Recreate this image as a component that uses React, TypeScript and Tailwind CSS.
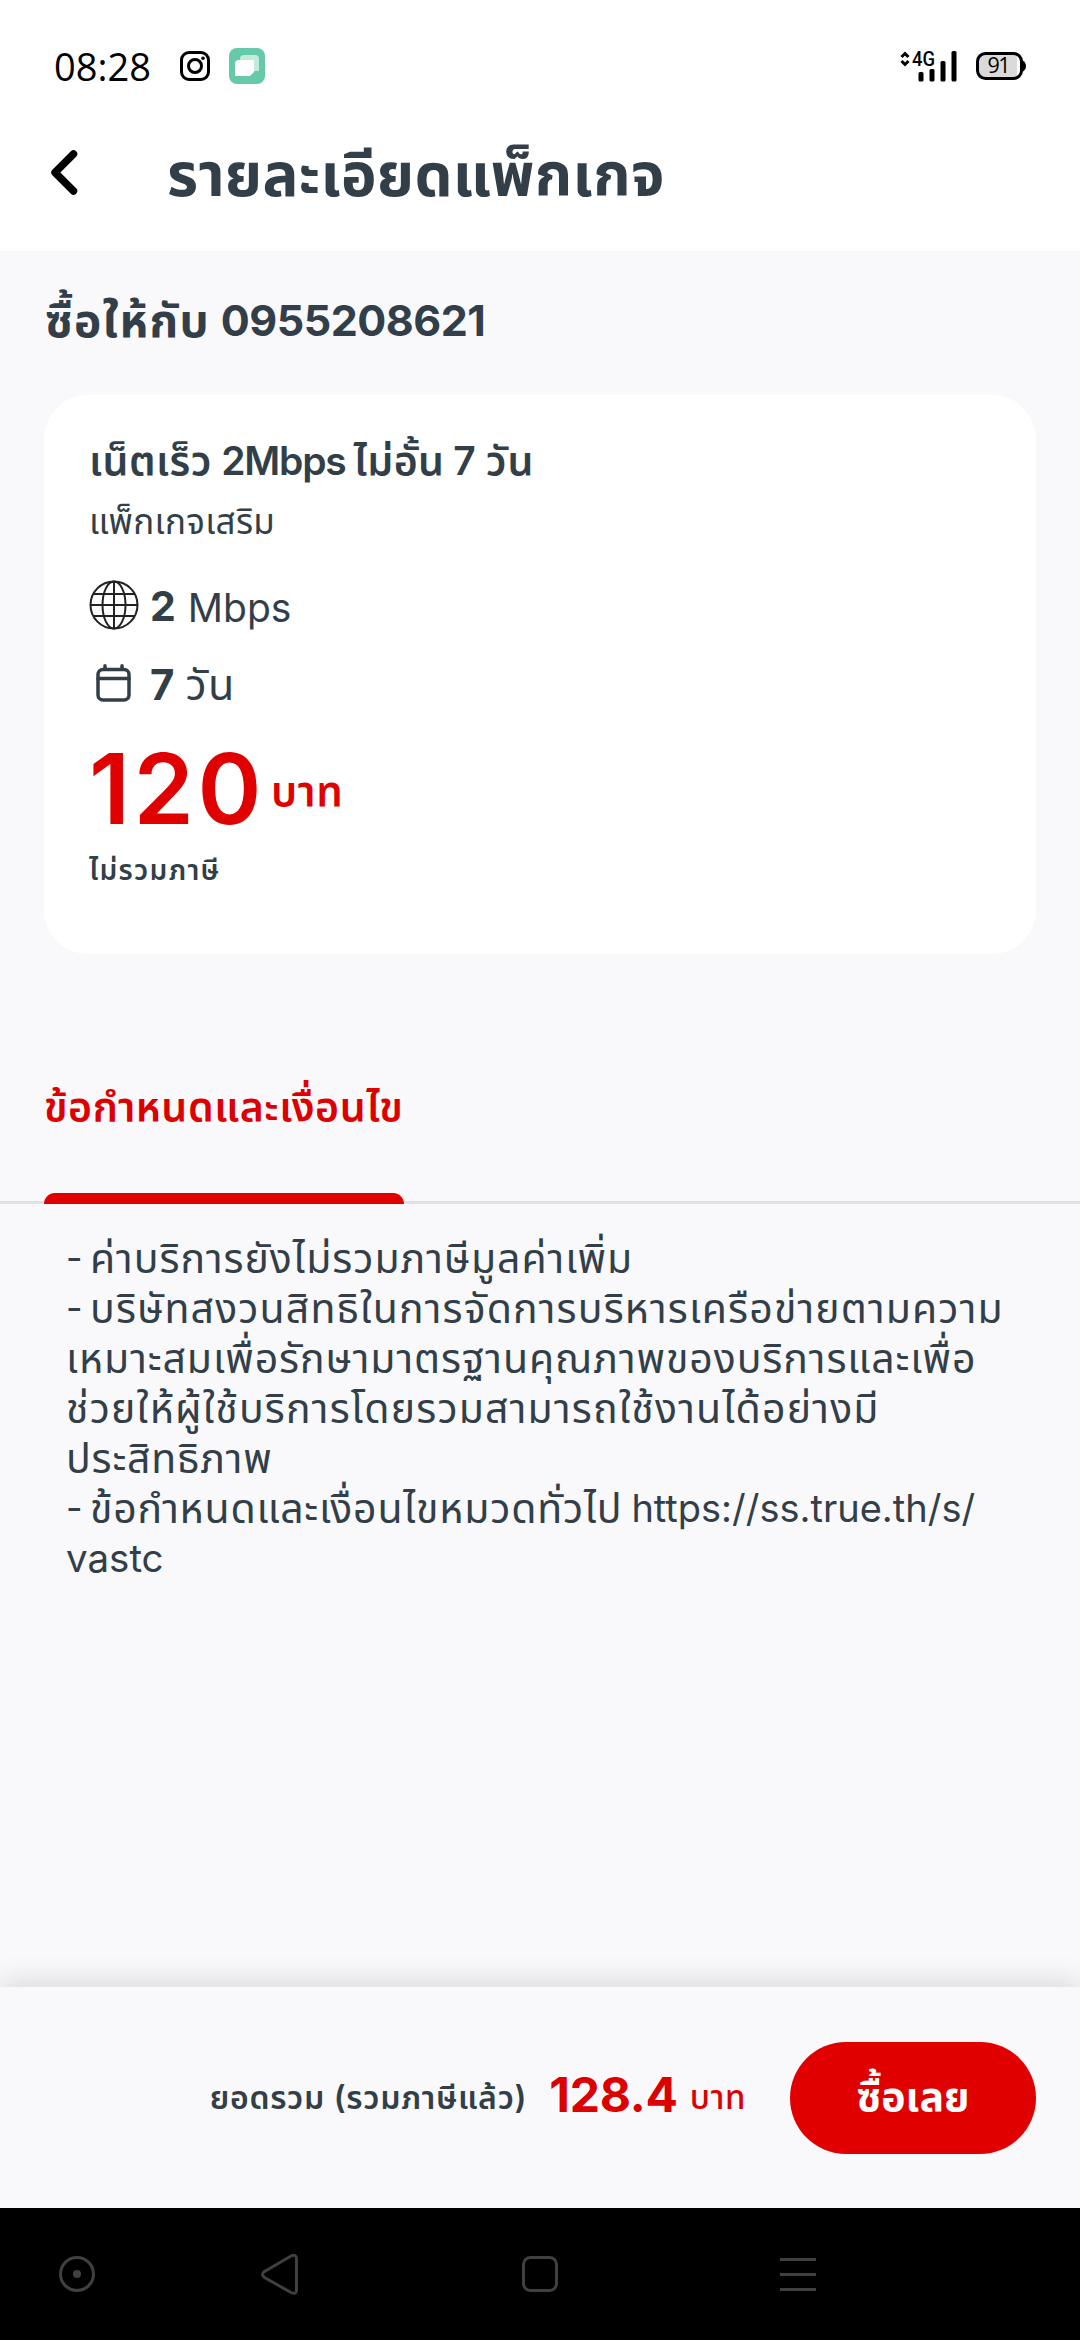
const terms = [
    { dash: true, text: "ค่าบริการยังไม่รวมภาษีมูลค่าเพิ่ม", link: "", space: "tracking-[0.95px]" },
    { dash: true, text: "บริษัทสงวนสิทธิในการจัดการบริหารเครือข่ายตามความ", link: "", space: "tracking-[1.14px]" },
    { dash: false, text: "เหมาะสมเพื่อรักษามาตรฐานคุณภาพของบริการและเพื่อ", link: "", space: "tracking-[0.93px]" },
    { dash: false, text: "ช่วยให้ผู้ใช้บริการโดยรวมสามารถใช้งานได้อย่างมี", link: "", space: "tracking-[1.18px]" },
    { dash: false, text: "ประสิทธิภาพ", link: "", space: "tracking-[0.8px]" },
    { dash: true, text: "ข้อกำหนดและเงื่อนไขหมวดทั่วไป", link: "https://ss.true.th/s/", space: "tracking-[0.8px]" },
    { dash: false, text: "", link: "vastc", space: "" },
]

function StatusBar() {
    return (
        <div className="flex h-[132px] items-center justify-between pl-[54px] pr-[54px] text-black">
            <div className="flex items-center">
                <span className="w-[126px] font-['Open_Sans',sans-serif] text-[38px] leading-[40px]">08:28</span>
                <svg width="30" height="30" viewBox="0 0 30 30" fill="none" stroke="black">
                    <rect x="1.5" y="1.5" width="27" height="27" rx="7.5" strokeWidth="3" />
                    <circle cx="15" cy="15" r="6.5" strokeWidth="3" />
                    <circle cx="23" cy="7.2" r="1.8" fill="black" stroke="none" />
                </svg>
                <svg className="ml-[19px]" width="36" height="36" viewBox="0 0 36 36">
                    <rect width="36" height="36" rx="8" fill="#66c9a9" />
                    <path d="M15 7H26Q30 7 30 11V23H11V11Q11 7 15 7Z" fill="#c2ebdc" />
                    <path d="M10 12H25V24L21 28H6V16Q6 12 10 12Z" fill="white" />
                </svg>
            </div>
            <div className="flex items-center gap-[19px]">
                <svg className="overflow-visible" width="57" height="31" viewBox="0 0 57 31">
                    <path d="M1.5 6L5 2.5L8.5 6M1.5 10L5 13.5L8.5 10" fill="none" stroke="black" strokeWidth="3" />
                    <text x="12" y="15" fontFamily="Roboto, sans-serif" fontSize="19.5" fontWeight="500" textLength="23" lengthAdjust="spacingAndGlyphs">4G</text>
                    <rect x="18.5" y="21" width="5" height="9.5" rx="1.5" />
                    <rect x="29.5" y="18" width="5" height="12.5" rx="1.5" />
                    <rect x="40.5" y="10" width="5" height="20.5" rx="1.5" />
                    <rect x="51.5" y="0" width="5" height="30.5" rx="1.5" />
                </svg>
                <svg className="overflow-visible" width="50" height="28" viewBox="0 0 50 28">
                    <rect x="1.5" y="1.5" width="44" height="25" rx="8" fill="white" />
                    <path d="M9.5 1.5H41V26.5H9.5Q1.5 26.5 1.5 18.5V9.5Q1.5 1.5 9.5 1.5Z" fill="#dadada" />
                    <rect x="1.5" y="1.5" width="44" height="25" rx="8" fill="none" stroke="black" strokeWidth="3" />
                    <path d="M46 8Q50 10 50 14T46 20Z" />
                    <text x="11.5" y="21" fontFamily="Open Sans, sans-serif" fontSize="21.5" textLength="23">91</text>
                </svg>
            </div>
        </div>
    )
}

function Header() {
    return (
        <header className="flex h-[119px] pl-[50px]">
            <svg className="mt-[18px]" width="28" height="45" viewBox="0 0 28 45" fill="none" stroke="black" strokeWidth="7.5" strokeLinecap="round" strokeLinejoin="round">
                <path d="M23.5 4L5 22.5L23.5 41" />
            </svg>
            <h1 className="ml-[89px] mt-[7px] h-[70px] whitespace-nowrap text-[60px] font-bold leading-[70px] tracking-[0.3px]">รายละเอียดแพ็กเกจ</h1>
        </header>
    )
}

function PackageCard() {
    return (
        <section className="mx-[44px] mt-[44px] h-[559px] rounded-[44px] bg-white pl-[45px] pt-[36px] whitespace-nowrap">
            <h3 className="flex h-[60px] text-[41px] font-semibold leading-[60px]">
                <span className="tracking-[0.5px]">เน็ตเร็ว</span>
                <span className="ml-[9px] text-[39px] tracking-[-1.2px]">2Mbps</span>
                <span className="ml-[8px] tracking-[0.3px]">ไม่อั้น</span>
                <span className="ml-[9px] text-[39px] tracking-[-1px]">7</span>
                <span className="ml-[11px] tracking-[1px]">วัน</span>
            </h3>
            <p className="h-[60px] text-[35px] leading-[60px] tracking-[0.3px]">แพ็กเกจเสริม</p>
            <div className="mt-[18px] flex h-[72px] items-center">
                <svg width="50" height="50" viewBox="0 0 50 50" fill="none" stroke="#222" strokeWidth="2">
                    <circle cx="25" cy="25" r="23.5" />
                    <ellipse cx="25" cy="25" rx="11.5" ry="23.5" />
                    <path d="M25 1.5V48.5M1.5 25H48.5M5 14H45M5 36H45" />
                </svg>
                <b className="ml-[11px] pt-[3px] text-[41px]">2</b>
                <span className="ml-[12px] pt-[6px] text-[39px]">Mbps</span>
            </div>
            <div className="flex h-[84px] items-center">
                <svg className="ml-[7px]" width="35" height="38" viewBox="0 0 35 38" fill="none" stroke="#333f48" strokeWidth="3.5">
                    <rect x="2" y="5.5" width="31" height="30.5" rx="5" />
                    <path d="M2 14.5H33M9 5V1.8M26 5V1.8" strokeLinecap="round" />
                </svg>
                <b className="ml-[19px] pt-[2px] text-[42px]">7</b>
                <span className="ml-[11px] pt-[3px] text-[43px] tracking-[1.5px]">วัน</span>
            </div>
            <div className="mt-[4px] flex h-[120px] items-center text-[#e00000]">
                <b className="text-[97px] font-semibold leading-[120px] tracking-[3.5px]">120</b>
                <span className="ml-[6px] pt-[2px] text-[42px] font-semibold tracking-[0.6px]">บาท</span>
            </div>
            <p className="h-[40px] text-[28px] font-semibold leading-[42px] tracking-[1.3px]">ไม่รวมภาษี</p>
        </section>
    )
}

function Terms() {
    return (
        <>
            <div className="mt-[120px] h-[130px] border-b-[3px] border-[#e2e2e5] pl-[44px]">
                <div className="flex h-[130px] w-[360px] flex-col justify-between text-[#dc0000]">
                    <h3 className="h-[62px] whitespace-nowrap text-[41px] font-semibold leading-[66px] tracking-[0.55px]">ข้อกำหนดและเงื่อนไข</h3>
                    <div className="h-[11px] shrink-0 rounded-t-[11px] bg-[#e00000]" />
                </div>
            </div>
            <div className="mt-[29px] pl-[66px] text-[41px] leading-[50px]">
                {terms.map((line) => (
                    <p key={line.text} className="flex h-[50px] whitespace-nowrap">
                        {line.dash && <span className="w-[24px] text-[36px]">-</span>}
                        <span className={line.space}>{line.text}</span>
                        {line.link && <span className={line.dash ? "ml-[9px] text-[38px]" : "text-[38.5px]"}>{line.link}</span>}
                    </p>
                ))}
            </div>
        </>
    )
}

function BuyBar() {
    return (
        <footer className="flex h-[221px] items-center justify-end bg-[#f9f9fc] pr-[44px] whitespace-nowrap shadow-[0_-4px_28px_rgba(0,0,0,0.14)]">
            <span className="text-[32px] font-semibold tracking-[0.7px]">ยอดรวม (รวมภาษีแล้ว)</span>
            <b className="ml-[22px] pb-[5px] text-[48px] tracking-[-0.2px] text-[#dc0000]">128.4</b>
            <span className="ml-[12px] text-[33px] font-medium tracking-[0.6px] text-[#dc0000]">บาท</span>
            <button className="ml-[44px] h-[112px] w-[246px] rounded-[56px] bg-[#e00000] pb-[2px] text-[41px] font-bold text-white">ซื้อเลย</button>
        </footer>
    )
}

function NavBar() {
    return (
        <nav className="h-[132px] bg-black">
            <svg width="1080" height="132" viewBox="0 0 1080 132" fill="none" stroke="#404040" strokeWidth="3">
                <circle cx="77" cy="66" r="16.5" />
                <circle cx="77" cy="66" r="4" fill="#404040" stroke="none" />
                <path d="M264.5 63.5L291 48Q296.5 45.5 296.5 51V82Q296.5 87 291 84.5L264.5 69.5Q260.5 66.5 264.5 63.5Z" />
                <rect x="523.5" y="49.5" width="33" height="33" rx="7" />
                <path d="M780 51.5H816M780 66.5H816M780 81.5H816" />
            </svg>
        </nav>
    )
}

function App() {
    return (
        <div className="flex h-[2340px] w-[1080px] flex-col overflow-hidden bg-white font-['Inter','Noto_Sans_Thai',sans-serif] text-[#333f48]">
            <StatusBar />
            <Header />
            <main className="flex-1 bg-[#f9f9fc]">
                <h2 className="flex h-[100px] pl-[45px] pt-[34px] text-[46px] font-bold leading-[70px] whitespace-nowrap">
                    <span className="tracking-[1.3px]">ซื้อให้กับ</span>
                    <span className="ml-[11px] text-[43px] tracking-[-0.5px]">0955208621</span>
                </h2>
                <PackageCard />
                <Terms />
            </main>
            <BuyBar />
            <NavBar />
        </div>
    )
}
export default App
